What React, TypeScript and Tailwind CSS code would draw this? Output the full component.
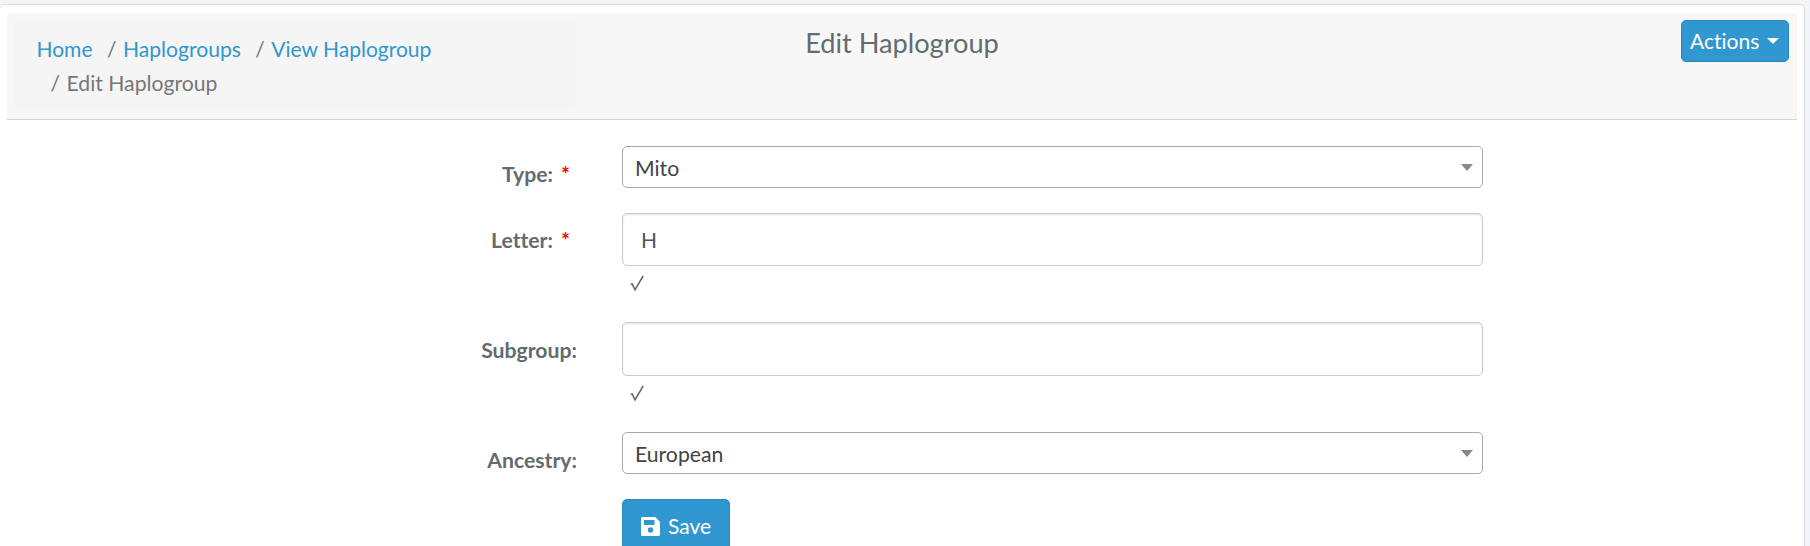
import type { ReactNode } from "react";

function Row({ label, required, className, labelClass, children }: { label?: string; required?: boolean; className: string; labelClass?: string; children: ReactNode }) {
  return (
    <div className={`flex ${className}`}>
      <div className={`w-[577px] shrink-0 text-right text-[21.2px] font-bold leading-[30px] ${labelClass ?? ""}`}>
        {label}
        {required && <span className="ml-[8px] mr-[7px] text-[#ff0000]">*</span>}
      </div>
      <div className="ml-[45px] w-[861px] shrink-0">{children}</div>
    </div>
  );
}

function Select({ value }: { value: string }) {
  return (
    <div className="flex h-[42px] items-center justify-between rounded-[5px] border border-[#aaaaaa] bg-white pl-[12px] pr-[9px] text-[21.2px] text-[#444444]">
      <span className="pt-[2px] leading-[38px]">{value}</span>
      <svg width="12" height="7" viewBox="0 0 12 7" className="fill-[#888888]">
        <path d="M0 0h12L6 7z" />
      </svg>
    </div>
  );
}

function Field({ defaultValue, className }: { defaultValue: string; className: string }) {
  return (
    <>
      <input
        type="text"
        defaultValue={defaultValue}
        className={`block w-full rounded-[5px] border border-[#cccccc] bg-white px-[18px] text-[#555555] shadow-[inset_0_1px_2px_rgba(0,0,0,0.12)] outline-none ${className}`}
      />
      <svg width="15" height="17" viewBox="0 0 15 17" className="ml-[8px] mt-[9px] fill-none stroke-[#5f676c]">
        <path d="M.7 9.5 2.2 9 5 14.8 13.2.8" strokeWidth="1.6" />
      </svg>
    </>
  );
}

export default function App() {
  return (
    <div className="h-[546px] overflow-hidden bg-[#f2f6f9] pt-[4px] font-['Lato',sans-serif] text-[21px] text-[#636b6f] [font-variant-ligatures:none]">
      <main className="h-[560px] w-[1805px] rounded-[5px] border border-l-0 border-[#d9dcde] bg-white pt-[8px]">
        <header className="ml-[7px] flex h-[107px] w-[1790px] rounded-t-[3px] border-b border-[#d5d5d5] bg-[#f7f7f7] pt-[7px]">
          <nav className="ml-[7px] h-[90px] w-[562px] shrink-0 rounded-[5px] bg-[#f5f5f5] pl-[22.5px] pt-[12px] leading-[34px] text-[#777777]">
            <div className="flex">
              <a className="text-[#3097d1]">Home</a>
              <span className="ml-[14.5px] mr-[6.5px]">/</span>
              <a className="text-[21.1px] text-[#3097d1]">Haplogroups</a>
              <span className="ml-[14.500px] mr-[6.500px]">/</span>
              <a className="text-[#3097d1]">View Haplogroup</a>
            </div>
            <div className="flex pl-[14px]">
              <span className="mr-[6.5px]">/</span>
              <span className="text-[21.2px]">Edit Haplogroup</span>
            </div>
          </nav>
          <h1 className="w-[652px] text-center text-[27.2px] leading-[46px]">Edit Haplogroup</h1>
          <button className="ml-auto mr-[8px] flex h-[42px] w-[108px] items-center rounded-[5px] border border-[#2a88bd] bg-[#3097d1] pl-[8px] text-white">
            Actions
            <svg width="12" height="6" viewBox="0 0 12 6" className="ml-[8px] fill-white">
              <path d="M0 0h12L6 6z" />
            </svg>
          </button>
        </header>
        <form className="pt-[26px]">
          <Row label="Type:" required className="h-[67px]" labelClass="pt-[13px]">
            <Select value="Mito" />
          </Row>
          <Row label="Letter:" required className="h-[109px]" labelClass="pt-[12px]">
            <Field defaultValue="H" className="h-[53px]" />
          </Row>
          <Row label="Subgroup:" className="h-[110px]" labelClass="pt-[13px]">
            <Field defaultValue="" className="h-[54px]" />
          </Row>
          <Row label="Ancestry:" className="h-[67px]" labelClass="pt-[13px]">
            <Select value="European" />
          </Row>
          <Row className="h-[55px]">
            <button type="button" className="flex h-[55px] w-[108px] items-center rounded-[5px] border border-[#2a88bd] bg-[#3097d1] pb-[1px] pl-[18px] text-white">
              <svg width="19" height="19" viewBox="0 0 19 19" className="mr-[8px] fill-white" fillRule="evenodd">
                <path d="M1.5 0h12.8L19 4.7v12.8a1.5 1.5 0 0 1-1.5 1.5h-16A1.5 1.5 0 0 1 0 17.5v-16A1.5 1.5 0 0 1 1.5 0ZM3 3v5h10.5V3ZM9.500 10.300a2.700 2.700 0 1 0 0 5.400 2.700 2.700 0 1 0 0-5.400Z" />
              </svg>
              Save
            </button>
          </Row>
        </form>
      </main>
    </div>
  );
}
